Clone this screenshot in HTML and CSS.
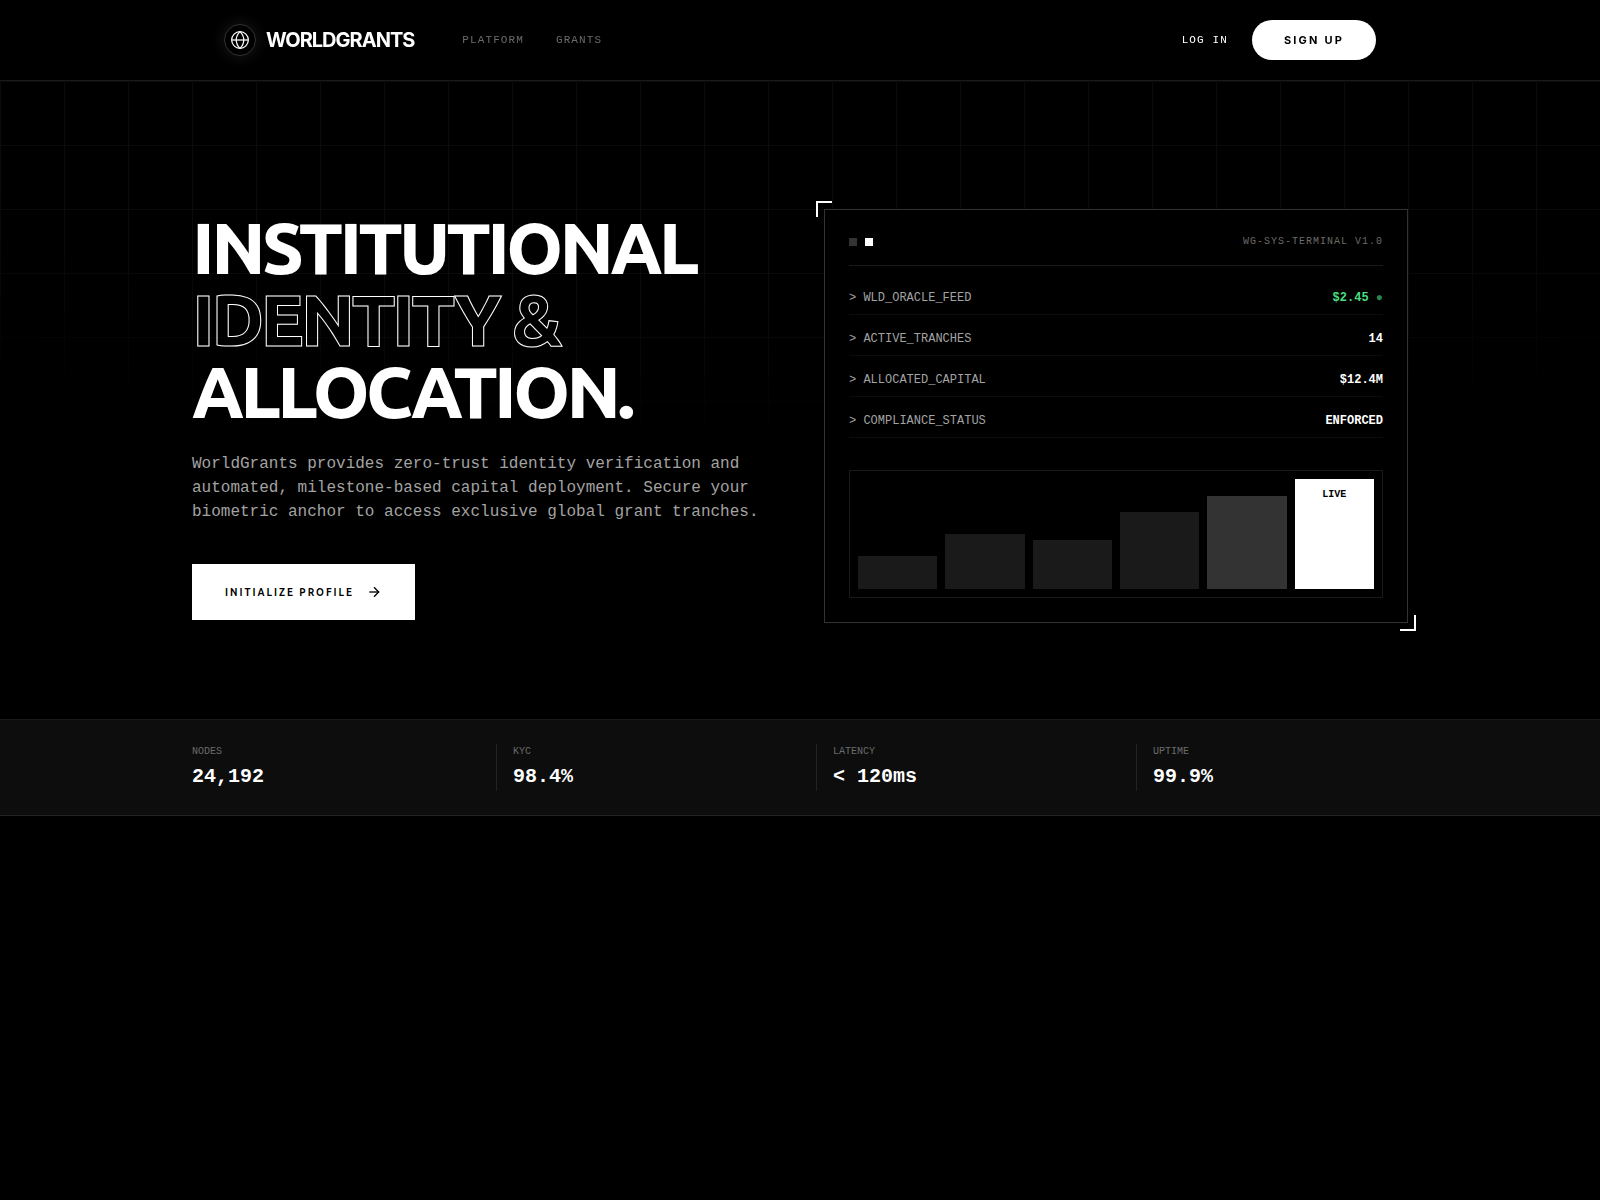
FILE: index.html
```html
<!DOCTYPE html>
<html lang="en">
<head>
<meta charset="utf-8">
<meta name="viewport" content="width=device-width, initial-scale=1">
<title>WorldGrants</title>
<link rel="stylesheet" href="styles.css">
</head>
<body>
<header class="site-header">
  <div class="header-inner">
    <div class="header-left">
      <a class="brand" href="#">
        <span class="brand-mark">
          <svg width="20" height="20" viewBox="0 0 24 24" fill="none" stroke="currentColor" stroke-width="1.5" aria-hidden="true"><circle cx="12" cy="12" r="10"/><path d="M2 12h20"/><path d="M12 2c3 2.8 4.500 6.200 4.500 10s-1.500 7.200-4.500 10c-3-2.800-4.500-6.200-4.500-10s1.500-7.200 4.500-10z"/></svg>
        </span>
        <span class="brand-name">WORLDGRANTS</span>
      </a>
      <nav class="nav">
        <a class="nav-link" href="#">PLATFORM</a>
        <a class="nav-link" href="#">GRANTS</a>
      </nav>
    </div>
    <div class="header-actions">
      <a class="nav-link login" href="#">LOG IN</a>
      <button class="signup" type="button">SIGN UP</button>
    </div>
  </div>
</header>
<main>
  <section class="hero">
    <div class="hero-inner">
      <div class="intro">
        <h1 class="headline">INSTITUTIONAL<br><span class="outline">IDENTITY &amp;</span><br>ALLOCATION.</h1>
        <p class="lead">WorldGrants provides zero-trust identity verification and automated, milestone-based capital deployment. Secure your biometric anchor to access exclusive global grant tranches.</p>
        <button class="cta" type="button">INITIALIZE PROFILE
          <svg width="16" height="16" viewBox="0 0 24 24" fill="none" stroke="currentColor" stroke-width="2" aria-hidden="true"><path d="M5 12h14"/><path d="M12 5l7 7-7 7"/></svg>
        </button>
      </div>
      <div class="terminal">
        <div class="terminal-bar">
          <div class="lights"><span class="light"></span><span class="light light-on"></span></div>
          <span class="terminal-title">WG-SYS-TERMINAL V1.0</span>
        </div>
        <dl class="readings">
          <div class="reading"><dt>&gt; WLD_ORACLE_FEED</dt><dd class="up">$2.45 <span class="pulse">●</span></dd></div>
          <div class="reading"><dt>&gt; ACTIVE_TRANCHES</dt><dd>14</dd></div>
          <div class="reading"><dt>&gt; ALLOCATED_CAPITAL</dt><dd>$12.4M</dd></div>
          <div class="reading"><dt>&gt; COMPLIANCE_STATUS</dt><dd>ENFORCED</dd></div>
        </dl>
        <div class="chart">
          <div class="bar" style="height:30%"></div>
          <div class="bar" style="height:50%"></div>
          <div class="bar" style="height:45%"></div>
          <div class="bar" style="height:70%"></div>
          <div class="bar bar-recent" style="height:85%"></div>
          <div class="bar bar-live" style="height:100%">LIVE</div>
        </div>
      </div>
    </div>
  </section>
  <section class="stats">
    <dl class="stats-inner">
      <div class="stat"><dt>NODES</dt><dd>24,192</dd></div>
      <div class="stat"><dt>KYC</dt><dd>98.4%</dd></div>
      <div class="stat"><dt>LATENCY</dt><dd>&lt; 120ms</dd></div>
      <div class="stat"><dt>UPTIME</dt><dd>99.9%</dd></div>
    </dl>
  </section>
</main>
</body>
</html>
```
FILE: styles.css
```css
*, *::before, *::after { box-sizing: border-box; margin: 0; padding: 0; }

:root {
  --mono: "Liberation Mono", monospace;
  --sans: Ubuntu, Lato, sans-serif;
}

body {
  background: #000;
  color: #fff;
  font: 16px/24px var(--sans);
}

a { color: inherit; text-decoration: none; }
button { border: 0; cursor: pointer; }
svg { display: block; flex: none; }

/* Header */
.site-header {
  position: sticky;
  top: 0;
  z-index: 10;
  background: #000;
  border-bottom: 1px solid #1a1a1a;
  will-change: transform;
}
.header-inner {
  display: flex;
  align-items: center;
  justify-content: space-between;
  max-width: 1216px;
  height: 80px;
  margin: 0 auto;
  padding: 0 32px;
}
.header-left { display: flex; align-items: center; gap: 48px; }
.brand { display: flex; align-items: center; gap: 10px; }
.brand-mark {
  display: grid;
  place-items: center;
  width: 32px;
  height: 32px;
  border: 1px solid #333;
  border-radius: 50%;
  box-shadow: 0 0 15px rgba(255, 255, 255, 0.1);
}
.brand-name {
  font: 700 20px/28px Inter, sans-serif;
  letter-spacing: -0.05em;
}
.nav { display: flex; gap: 32px; }
.nav-link {
  font: 11px/16px var(--mono);
  letter-spacing: 0.1em;
  color: #6b6b6b;
}
.login { color: #fff; }
.header-actions { display: flex; align-items: center; gap: 24px; }
.signup {
  height: 40px;
  padding: 0 32px;
  border-radius: 20px;
  background: #fff;
  color: #000;
  font: 700 11px/16px Inter, sans-serif;
  letter-spacing: 0.2em;
}

/* Hero */
.hero { position: relative; padding: 128px 32px 96px; }
.hero::before {
  content: "";
  position: absolute;
  inset: 0;
  background-image:
    linear-gradient(to right, #0b0b0b 1px, transparent 1px),
    linear-gradient(to bottom, #0b0b0b 1px, transparent 1px);
  background-size: 64px 64px;
  -webkit-mask-image: radial-gradient(ellipse 80% 50% at 50% 0%, #000 70%, transparent 114%);
  mask-image: radial-gradient(ellipse 80% 50% at 50% 0%, #000 70%, transparent 114%);
}
.hero-inner {
  position: relative;
  display: grid;
  grid-template-columns: 1fr 1fr;
  gap: 48px;
  align-items: center;
  max-width: 1216px;
  margin: 0 auto;
}
.headline {
  margin-bottom: 24px;
  font-size: 72px;
  font-weight: 900;
  line-height: 72px;
  letter-spacing: -0.05em;
  white-space: nowrap;
}
.outline { color: transparent; -webkit-text-stroke: 1px #fff; }
.lead {
  max-width: 576px;
  margin-bottom: 40px;
  font: 16px/24px var(--mono);
  color: #a3a3a3;
}
.cta {
  display: flex;
  align-items: center;
  gap: 12px;
  padding: 19px 32px;
  border: 1px solid #fff;
  background: #fff;
  color: #000;
  font: 700 10px/15px var(--sans);
  letter-spacing: 0.2em;
}

/* Terminal panel */
.terminal {
  position: relative;
  padding: 24px;
  border: 1px solid #333;
  background: #000;
  font-family: var(--mono);
}
.terminal::before,
.terminal::after {
  content: "";
  position: absolute;
  width: 16px;
  height: 16px;
}
.terminal::before {
  top: -9px;
  left: -9px;
  border-top: 2px solid #fff;
  border-left: 2px solid #fff;
}
.terminal::after {
  right: -9px;
  bottom: -9px;
  border-right: 2px solid #fff;
  border-bottom: 2px solid #fff;
}
.terminal-bar {
  display: flex;
  align-items: center;
  justify-content: space-between;
  margin-bottom: 24px;
  padding-bottom: 16px;
  border-bottom: 1px solid #1a1a1a;
}
.lights { display: flex; gap: 8px; }
.light { width: 8px; height: 8px; background: #333; }
.light-on { background: #fff; }
.terminal-title {
  font-size: 10px;
  line-height: 15px;
  letter-spacing: 0.1em;
  color: #6b6b6b;
}
.readings { display: grid; gap: 16px; font-size: 12px; line-height: 16px; }
.reading {
  display: flex;
  justify-content: space-between;
  padding-bottom: 8px;
  border-bottom: 1px solid #0d0d0d;
}
.reading dt { color: #a3a3a3; }
.reading dd { font-weight: 700; }
.reading .up { color: #4ade80; }
.pulse { opacity: 0.6; }
.chart {
  display: flex;
  align-items: flex-end;
  gap: 8px;
  height: 128px;
  margin-top: 32px;
  padding: 8px;
  border: 1px solid #1a1a1a;
}
.bar { flex: 1; background: #1a1a1a; }
.bar-recent { background: #333; }
.bar-live {
  padding-top: 8px;
  background: #fff;
  color: #000;
  font-size: 10px;
  font-weight: 700;
  line-height: 15px;
  text-align: center;
}

/* Network stats */
.stats {
  padding: 24px 32px;
  border-top: 1px solid #1a1a1a;
  border-bottom: 1px solid #222;
  background: #0d0d0d;
  font-family: var(--mono);
}
.stats-inner {
  display: grid;
  grid-template-columns: 19fr 20fr 20fr 17fr;
  max-width: 1216px;
  margin: 0 auto;
}
.stat + .stat { padding-left: 16px; border-left: 1px solid #222; }
.stat dt { margin-bottom: 4px; font-size: 10px; line-height: 15px; color: #6b6b6b; }
.stat dd { font-size: 20px; font-weight: 700; line-height: 28px; }
```
